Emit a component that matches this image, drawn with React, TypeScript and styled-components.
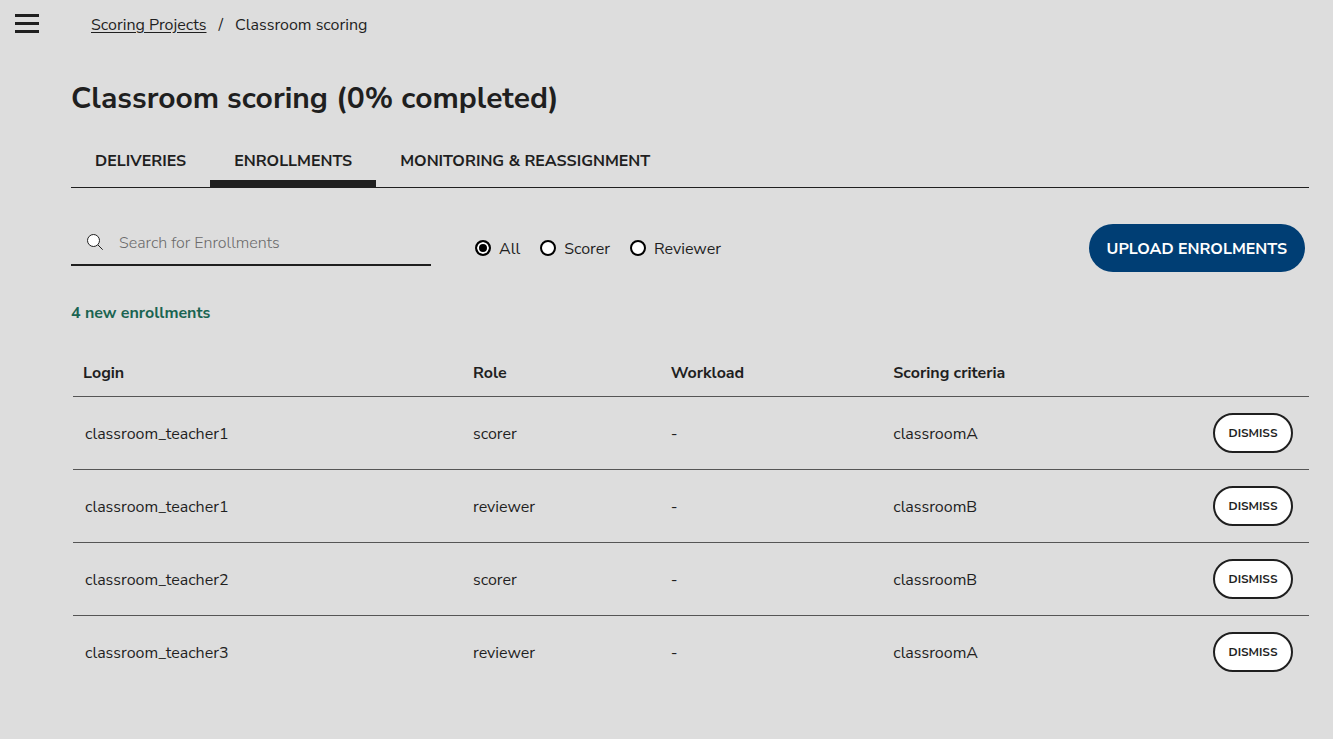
import React, { useState } from "react";
import styled, { createGlobalStyle } from "styled-components";

const INK = "#1f1f1f";

const GlobalStyle = createGlobalStyle`
  *, *::before, *::after { box-sizing: border-box; }
  body {
    margin: 0;
    background: #dddddd;
    color: ${INK};
    font-family: "Nunito Sans", Nunito, Lato, "Noto Sans", sans-serif;
    font-size: 16px;
    line-height: 24px;
  }
  button, input { font: inherit; color: inherit; }
`;

const Page = styled.div`
  min-height: 100vh;
  padding: 0 24px 24px 15px;
`;

const TopBar = styled.header`
  display: flex;
  align-items: flex-start;
  gap: 52px;
  height: 48px;
`;

const MenuButton = styled.button`
  display: flex;
  margin-top: 14px;
  padding: 0;
  border: 0;
  background: none;
  cursor: pointer;
`;

const Breadcrumbs = styled.nav`
  display: flex;
  gap: 12px;
  margin-top: 13px;
`;

const CrumbLink = styled.a`
  color: inherit;
  text-underline-offset: 2px;
`;

const Content = styled.main`
  padding-left: 56px;
`;

const Title = styled.h1`
  margin: 29px 0 0;
  font-size: 30px;
  line-height: 44px;
  font-weight: 700;
`;

const Tabs = styled.div`
  display: flex;
  margin-top: 19px;
  border-bottom: 1px solid ${INK};
`;

const Tab = styled.button<{ $active: boolean }>`
  height: 47px;
  padding: 1px 24px 0;
  border: 0;
  border-bottom: 7px solid ${(p) => (p.$active ? INK : "transparent")};
  background: none;
  font-weight: 700;
  text-transform: uppercase;
  cursor: pointer;
`;

const Toolbar = styled.div`
  display: flex;
  align-items: center;
  margin-top: 24px;
  padding-right: 4px;
`;

const SearchBox = styled.label`
  display: flex;
  align-items: center;
  gap: 16px;
  width: 360px;
  height: 48px;
  padding: 2px 16px 0;
  border-bottom: 2px solid ${INK};
`;

const SearchInput = styled.input`
  flex: 1;
  min-width: 0;
  padding: 2px 0 0;
  border: 0;
  outline: 0;
  background: none;
  font-weight: 300;
  &::placeholder { color: #6b6b6b; opacity: 1; }
`;

const RoleFilter = styled.fieldset`
  display: flex;
  gap: 20px;
  margin: 12px 0 0 44px;
  padding: 0;
  border: 0;
`;

const RadioLabel = styled.label`
  display: flex;
  align-items: center;
  gap: 8px;
  cursor: pointer;
`;

const RadioText = styled.span`
  padding-top: 2px;
`;

const Radio = styled.input`
  appearance: none;
  width: 16px;
  height: 16px;
  margin: 0;
  border: 2px solid #000;
  border-radius: 50%;
  background: #fff;
  &:checked {
    background: #000;
    box-shadow: inset 0 0 0 2px #fff;
  }
`;

const UploadButton = styled.button`
  height: 48px;
  margin: 12px 0 0 auto;
  padding: 2px 18px 0;
  border: 0;
  border-radius: 24px;
  background: #003e74;
  color: #fff;
  font-weight: 700;
  text-transform: uppercase;
  cursor: pointer;
`;

const Notice = styled.p`
  margin: 29px 0 0;
  color: #1a6451;
  font-weight: 700;
`;

const Table = styled.table`
  width: calc(100% - 2px);
  margin: 23px 0 0 2px;
  border-collapse: collapse;
  table-layout: fixed;
`;

const Column = styled.col<{ $width?: string }>`
  width: ${(p) => p.$width ?? "auto"};
`;

const HeadCell = styled.th`
  height: 48px;
  padding: 2px 10px 0;
  text-align: left;
  font-weight: 700;
`;

const Row = styled.tr`
  border-top: 1px solid #555555;
`;

const Cell = styled.td`
  height: 73px;
  padding: 2px 10px 0;
  &:first-child { padding-left: 12px; }
  &:last-child { padding: 0 16px 0 0; text-align: right; }
`;

const DismissButton = styled.button`
  width: 80px;
  height: 40px;
  padding: 0;
  border: 2px solid ${INK};
  border-radius: 20px;
  background: #fff;
  font-size: 12px;
  line-height: 16px;
  font-weight: 700;
  text-transform: uppercase;
  vertical-align: middle;
  cursor: pointer;
`;

const MenuIcon = () => (
  <svg width="24" height="19" viewBox="0 0 24 19" fill={INK} aria-hidden="true">
    <rect width="24" height="3" />
    <rect y="8" width="24" height="3" />
    <rect y="16" width="24" height="3" />
  </svg>
);

const SearchIcon = () => (
  <svg width="16" height="16" viewBox="0 0 16 16" aria-hidden="true">
    <circle cx="6.5" cy="6.5" r="6" fill="#fff" stroke={INK} />
    <path d="M11 11l4.7 4.7" stroke={INK} />
  </svg>
);

const tabs = ["Deliveries", "Enrollments", "Monitoring & Reassignment"];
const roles = ["All", "Scorer", "Reviewer"];
const enrollments = [
  { login: "classroom_teacher1", role: "scorer", criteria: "classroomA" },
  { login: "classroom_teacher1", role: "reviewer", criteria: "classroomB" },
  { login: "classroom_teacher2", role: "scorer", criteria: "classroomB" },
  { login: "classroom_teacher3", role: "reviewer", criteria: "classroomA" },
];

export default function App() {
  const [tab, setTab] = useState("Enrollments");
  const [role, setRole] = useState("All");
  return (
    <Page>
      <GlobalStyle />
      <TopBar>
        <MenuButton type="button" aria-label="Menu">
          <MenuIcon />
        </MenuButton>
        <Breadcrumbs aria-label="Breadcrumb">
          <CrumbLink href="#projects">Scoring Projects</CrumbLink>
          <span>/</span>
          <span>Classroom scoring</span>
        </Breadcrumbs>
      </TopBar>
      <Content>
        <Title>Classroom scoring (0% completed)</Title>
        <Tabs role="tablist">
          {tabs.map((t) => (
            <Tab key={t} type="button" role="tab" aria-selected={t === tab} $active={t === tab} onClick={() => setTab(t)}>
              {t}
            </Tab>
          ))}
        </Tabs>
        <Toolbar>
          <SearchBox>
            <SearchIcon />
            <SearchInput type="text" placeholder="Search for Enrollments" aria-label="Search for Enrollments" />
          </SearchBox>
          <RoleFilter aria-label="Role">
            {roles.map((r) => (
              <RadioLabel key={r}>
                <Radio type="radio" name="role" checked={r === role} onChange={() => setRole(r)} />
                <RadioText>{r}</RadioText>
              </RadioLabel>
            ))}
          </RoleFilter>
          <UploadButton type="button">Upload enrolments</UploadButton>
        </Toolbar>
        <Notice>4 new enrollments</Notice>
        <Table>
          <colgroup>
            <Column $width="390px" />
            <Column $width="16%" />
            <Column $width="18%" />
            <Column />
            <Column $width="120px" />
          </colgroup>
          <thead>
            <tr>
              <HeadCell scope="col">Login</HeadCell>
              <HeadCell scope="col">Role</HeadCell>
              <HeadCell scope="col">Workload</HeadCell>
              <HeadCell scope="col">Scoring criteria</HeadCell>
              <HeadCell scope="col" aria-label="Actions" />
            </tr>
          </thead>
          <tbody>
            {enrollments.map((e, i) => (
              <Row key={i}>
                <Cell>{e.login}</Cell>
                <Cell>{e.role}</Cell>
                <Cell>-</Cell>
                <Cell>{e.criteria}</Cell>
                <Cell>
                  <DismissButton type="button">Dismiss</DismissButton>
                </Cell>
              </Row>
            ))}
          </tbody>
        </Table>
      </Content>
    </Page>
  );
}
